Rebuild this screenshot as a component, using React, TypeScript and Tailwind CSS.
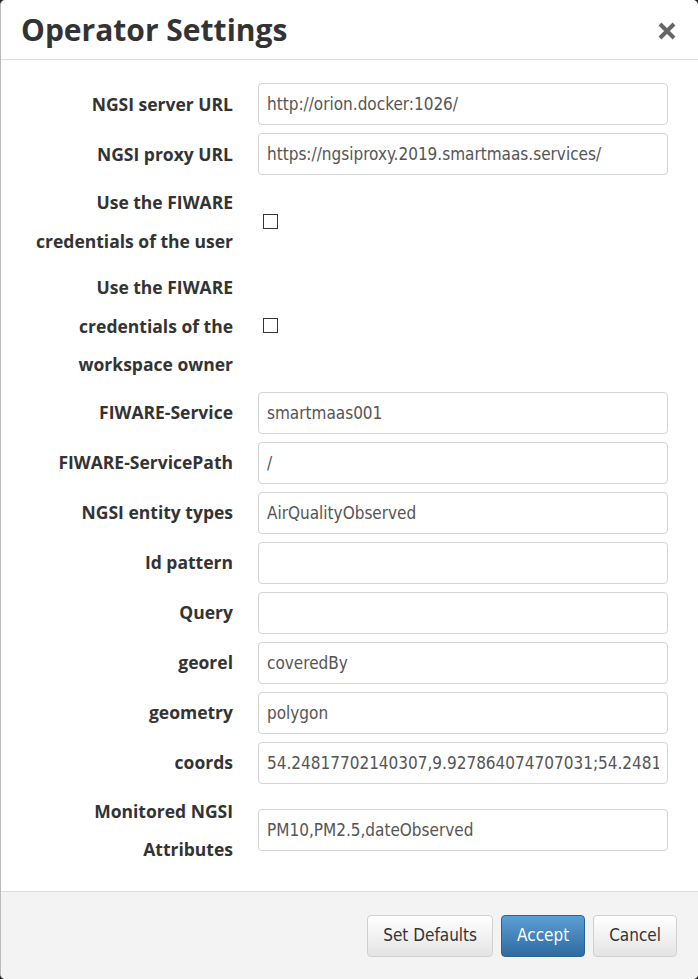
import React from "react";

type Field = {
  label: string[];
  value?: string;
  checkbox?: boolean;
};

const fields: Field[] = [
  { label: ["NGSI server URL"], value: "http://orion.docker:1026/" },
  { label: ["NGSI proxy URL"], value: "https://ngsiproxy.2019.smartmaas.services/" },
  { label: ["Use the FIWARE", "credentials of the user"], checkbox: true },
  { label: ["Use the FIWARE", "credentials of the", "workspace owner"], checkbox: true },
  { label: ["FIWARE-Service"], value: "smartmaas001" },
  { label: ["FIWARE-ServicePath"], value: "/" },
  { label: ["NGSI entity types"], value: "AirQualityObserved" },
  { label: ["Id pattern"], value: "" },
  { label: ["Query"], value: "" },
  { label: ["georel"], value: "coveredBy" },
  { label: ["geometry"], value: "polygon" },
  {
    label: ["coords"],
    value:
      "54.24817702140307,9.927864074707031;54.24817702140307,10.079956054687502;54.1981,10.0799;54.1981,9.9278",
  },
  { label: ["Monitored NGSI", "Attributes"], value: "PM10,PM2.5,dateObserved" },
];

function FieldRow({ field }: { field: Field }) {
  return (
    <div className="flex items-center">
      <div className="w-[212px] shrink-0 text-right text-[17.5px] font-bold leading-[38.5px] text-[#333]">
        {field.label.map((line, i) => (
          <div key={i} className="whitespace-nowrap">
            {line}
          </div>
        ))}
      </div>
      <div className="ml-[25px] w-[410px]">
        {field.checkbox ? (
          <div className="flex h-[42px] items-center pl-[5px]">
            <span className="block h-[15px] w-[15px] border border-[#333] bg-white" />
          </div>
        ) : (
          <input
            readOnly
            value={field.value}
            className="block h-[42px] w-full rounded-[4px] border border-[#d4d4d4] bg-white px-[8px] text-[17px] text-[#555] outline-none [font-family:'DejaVu_Sans_Condensed','DejaVu_Sans',sans-serif]"
          />
        )}
      </div>
    </div>
  );
}

function Button({ children, primary }: { children: React.ReactNode; primary?: boolean }) {
  return (
    <button
      type="button"
      className={
        "h-[42px] rounded-[4px] border px-[15px] text-[17px] [font-family:'DejaVu_Sans_Condensed','DejaVu_Sans',sans-serif] " +
        (primary
          ? "border-[#2a6496] bg-gradient-to-b from-[#5c9fd6] to-[#2d6ba0] text-white"
          : "border-[#d0d0d0] bg-gradient-to-b from-[#ffffff] to-[#e4e4e4] text-[#333]")
      }
    >
      {children}
    </button>
  );
}

export default function App() {
  return (
    <div className="h-[979px] w-[698px] bg-[#222] [font-family:'Open_Sans',sans-serif]">
      <div className="flex h-full flex-col overflow-hidden rounded-[5px] border-l border-[#bbb] bg-white">
        <div className="flex h-[60px] shrink-0 items-center justify-between border-b border-[#ddd] pl-[20px] pr-[21px]">
          <h1 className="text-[30px] font-bold text-[#333]">Operator Settings</h1>
          <svg width="20" height="18" viewBox="0 0 20 18" className="mt-[2px]">
            <path d="M3 2 L17 16 M17 2 L3 16" stroke="#666" strokeWidth="4" strokeLinecap="butt" />
          </svg>
        </div>
        <div className="flex flex-1 flex-col gap-[8px] pl-[20px] pt-[23px]">
          {fields.map((f, i) => (
            <FieldRow key={i} field={f} />
          ))}
        </div>
        <div className="flex h-[88px] shrink-0 items-start justify-end gap-[8px] border-t border-[#ddd] bg-[#f3f3f3] pr-[21px] pt-[23px]">
          <Button>Set Defaults</Button>
          <Button primary>Accept</Button>
          <Button>Cancel</Button>
        </div>
      </div>
    </div>
  );
}
